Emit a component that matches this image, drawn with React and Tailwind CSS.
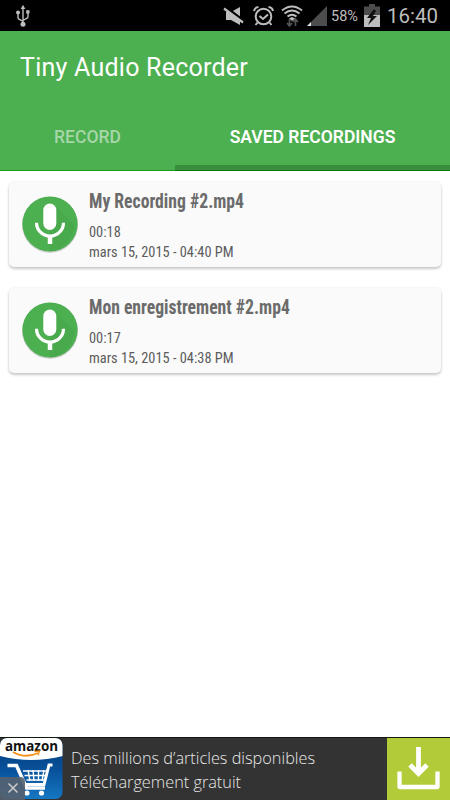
import { useState } from "react"

const RECORDINGS = [
  { name: "My Recording #2.mp4", length: "00:18", date: "mars 15, 2015 - 04:40 PM" },
  { name: "Mon enregistrement #2.mp4", length: "00:17", date: "mars 15, 2015 - 04:38 PM" }
]

function UsbIcon() {
  return (
    <svg className="ml-[15px] mt-[4px] h-[24px] w-[16px]" viewBox="0 0 16 24" fill="none" stroke="#bdbdbd" strokeWidth="1.4">
      <path d="M8 4v16M3 10v3.5q0 1.5 1.5 2l3.5 1.8M13 9v3.500q0 1.500-1.500 2L8 16.500" />
      <path d="M8 .8 10.300 5H5.700zM11.200 6.300h3.300v3.300h-3.300z" fill="#bdbdbd" stroke="none" />
      <circle cx="3" cy="8.600" r="2" fill="#bdbdbd" stroke="none" />
      <circle cx="8" cy="20.300" r="2.500" fill="#bdbdbd" stroke="none" />
    </svg>
  )
}

function MuteIcon() {
  return (
    <svg className="h-[20px] w-[22px]" viewBox="0 0 22 20">
      <path d="M3 6h5l9-5v18L8 14H3z" fill="#bdbdbd" />
      <path d="M1 .5 21 15.500" stroke="#000" strokeWidth="3.500" />
      <path d="M1 2.500 20 16.500" stroke="#bdbdbd" strokeWidth="2.200" />
    </svg>
  )
}

function AlarmIcon() {
  return (
    <svg className="ml-[8px] h-[22px] w-[22px]" viewBox="0 0 22 22" fill="none" stroke="#bdbdbd" strokeWidth="2">
      <circle cx="10.500" cy="11.500" r="7.800" />
      <path d="m6.500 11 3.500 3 5-4.500M1 6q.5-3.500 4.500-4M20 6q-.5-3.500-4.500-4M4.500 17.500 2.500 20M16.500 17.500l2 2.500" />
    </svg>
  )
}

function WifiIcon() {
  return (
    <svg className="ml-[6px] h-[24px] w-[22px]" viewBox="0 0 22 24" fill="none">
      <path d="M1 6.500Q11-1.500 21 6.500M3.500 9.500q7.500-6 15 0M6.500 12.500q4.500-3.500 9 0" stroke="#bdbdbd" strokeWidth="2" />
      <path d="m8 14.500 3-1.500 3 1.500-3 2.500z" fill="#bdbdbd" />
      <path d="M8.500 15v6.500M6 19l2.500 3 2.500-3M14.500 22v-6.500M12 18l2.500-3 2.500 3" stroke="#555" strokeWidth="1.700" />
    </svg>
  )
}

function SignalIcon() {
  return (
    <svg className="ml-[4px] h-[20px] w-[20px]" viewBox="0 0 20 20">
      <path d="M20 0v20H0z" fill="#4d4d4d" />
      <path d="M4 16v4H0z" fill="#ddd" />
    </svg>
  )
}

function BatteryIcon() {
  return (
    <svg className="h-[23px] w-[16px]" viewBox="0 0 16 23">
      <path d="M5 0h6v2.500h5V11H0V2.500h5z" fill="#4d4d4d" />
      <path d="M0 11h16v12H0z" fill="#bdbdbd" />
      <path d="M10 5 3 14h4l-3 7 9-9H9l3-5z" fill="#111" />
    </svg>
  )
}

function MicIcon() {
  return (
    <svg className="h-[58px] w-[58px] shrink-0" viewBox="0 0 58 58">
      <circle cx="29" cy="29.800" r="28" fill="#000" opacity=".18" />
      <circle cx="29" cy="29" r="27.600" fill="#4caf50" />
      <path d="m33 10 20 20a27.600 27.600 0 0 1-24 26.600l-1-9z" fill="#449e48" opacity=".35" />
      <rect x="22.300" y="8.500" width="13" height="26.500" rx="6.500" fill="#fff" />
      <path d="M15.500 27.700a13.500 13.500 0 0 0 27 0" fill="none" stroke="#fff" strokeWidth="3.200" />
      <path d="M29 40.500v8.500" stroke="#fff" strokeWidth="4.500" />
    </svg>
  )
}

function StatusBar() {
  return (
    <div className="flex h-[31px] items-start justify-between bg-black text-[#bdbdbd]">
      <UsbIcon />
      <div className="flex h-[31px] w-[227px] items-center">
        <MuteIcon />
        <AlarmIcon />
        <WifiIcon />
        <SignalIcon />
        <span className="ml-[4px] mt-[2px] w-[27px] text-[14.5px]">58%</span>
        <span className="ml-[6px]"><BatteryIcon /></span>
        <span className="ml-[7px] mt-px text-[20.5px]">16:40</span>
      </div>
    </div>
  )
}

function RecordingCard({ name, length, date }) {
  return (
    <div className="flex h-[85px] rounded-[5px] bg-[#fafafa] pl-[12px] pt-[13px] shadow-[0_2px_3px_rgba(0,0,0,0.2),0_0_3px_rgba(0,0,0,0.08)]">
      <MicIcon />
      <div className="-mt-[5px] ml-[10px] whitespace-nowrap text-[#5c5c5c] [font-stretch:75%]">
        <div className="h-[24px] origin-left scale-x-[0.905] text-[19.5px] font-bold leading-[24px] text-[#6b6b6b]">{name}</div>
        <div className="mt-[8px] h-[20px] origin-left scale-x-[0.927] text-[15.5px] leading-[20px]">{length}</div>
        <div className="h-[20px] origin-left scale-x-[0.927] text-[15.5px] leading-[20px]">{date}</div>
      </div>
    </div>
  )
}

function AmazonLogo() {
  return (
    <svg className="h-[62px] w-[63px] shrink-0" viewBox="0 0 63 62">
      <defs>
        <linearGradient id="blue" x1="0" y1="0" x2="0" y2="1">
          <stop offset="0" stopColor="#003b78" />
          <stop offset="0.5" stopColor="#08509a" />
          <stop offset="1" stopColor="#1678c3" />
        </linearGradient>
        <clipPath id="tile"><rect width="62.500" height="61" rx="7" /></clipPath>
      </defs>
      <g clipPath="url(#tile)">
        <rect width="63" height="62" fill="url(#blue)" />
        <path d="M0 0h63v18Q31 26 0 18z" fill="#fff" />
      </g>
      <text x="5" y="12.500" textLength="53" lengthAdjust="spacingAndGlyphs" fontFamily="Open Sans, sans-serif" fontWeight="700" fontSize="13.500" fill="#111">amazon</text>
      <path d="M13 14q12 7 25 1" fill="none" stroke="#f7931e" strokeWidth="1.800" />
      <path d="m34.500 13.500 5-.5-1.500 4.500" fill="none" stroke="#f7931e" strokeWidth="1.300" />
      <path d="M7.500 27.500h9L26.500 50H45" fill="none" stroke="#fff" strokeWidth="3.500" />
      <path d="M23 33h24M24.500 37.500h22M26.500 42h19M28 32l2 11M33 32l1 11M38.500 32v11M44 32l-2 11" stroke="#fff" strokeWidth="1.400" />
      <path d="M52.500 27h-3.500L44 46.500H26" fill="none" stroke="#fff" strokeWidth="3" />
      <circle cx="27" cy="55" r="2.600" fill="#fff" />
      <circle cx="41.500" cy="55" r="2.600" fill="#fff" />
      <path d="M0 39h20q5 0 5 5v18H0z" fill="#55606e" opacity=".9" />
      <path d="m8.500 45.500 9 9m0-9-9 9" stroke="#ccc" strokeWidth="1.500" />
    </svg>
  )
}

function AdBanner() {
  return (
    <div className="flex h-[63px] border-t border-[#101810] bg-[#333]">
      <AmazonLogo />
      <div className="flex-1 whitespace-nowrap pl-[8px] pt-[9px] font-['Open_Sans',sans-serif] text-[16.3px] font-light leading-[23.500px] text-[#e8e8e8]">
        <div>Des millions d’articles disponibles</div>
        <div>Téléchargement gratuit</div>
      </div>
      <button className="h-[62px] w-[63px] bg-[#b2cb39]">
        <svg className="h-[62px] w-[63px]" viewBox="0 0 63 62" fill="none" stroke="#fff">
          <path d="M31.500 9v26" strokeWidth="4.800" />
          <path d="m23 27 8.500 8.500L40 27" strokeWidth="4.800" />
          <path d="M12.500 33.500V49h38V33.500" strokeWidth="4.300" strokeLinejoin="round" />
        </svg>
      </button>
    </div>
  )
}

export default function App() {
  const [tab, setTab] = useState("saved")

  return (
    <div className="flex h-[800px] w-[450px] flex-col overflow-hidden bg-white font-[Roboto,sans-serif]">
      <StatusBar />
      <header className="flex h-[140px] flex-col border-b border-[#169b1b] bg-[#4caf50] text-white">
        <h1 className="h-[72px] whitespace-nowrap pl-[20px] text-[25px] font-[370] leading-[74px] tracking-[0.24px]">Tiny Audio Recorder</h1>
        <nav className="flex flex-1 text-[17.5px] font-medium">
          <button
            className={`w-[175px] pt-[1px] ${tab === "record" ? "text-white" : "text-[#a6d7a8]"}`}
            onClick={() => setTab("record")}
          >
            RECORD
          </button>
          <button
            className="relative flex-1 whitespace-nowrap pt-[1px] font-semibold"
            onClick={() => setTab("saved")}
          >
            SAVED RECORDINGS
            <span className="absolute inset-x-0 -bottom-px h-[6px] border-b border-[#087a0b] bg-[#388e3c]" />
          </button>
        </nav>
      </header>
      <main className="flex flex-1 flex-col gap-[21px] px-[9px] pt-[11px]">
        {RECORDINGS.map((r) => (
          <RecordingCard key={r.name} {...r} />
        ))}
      </main>
      <AdBanner />
    </div>
  )
}
